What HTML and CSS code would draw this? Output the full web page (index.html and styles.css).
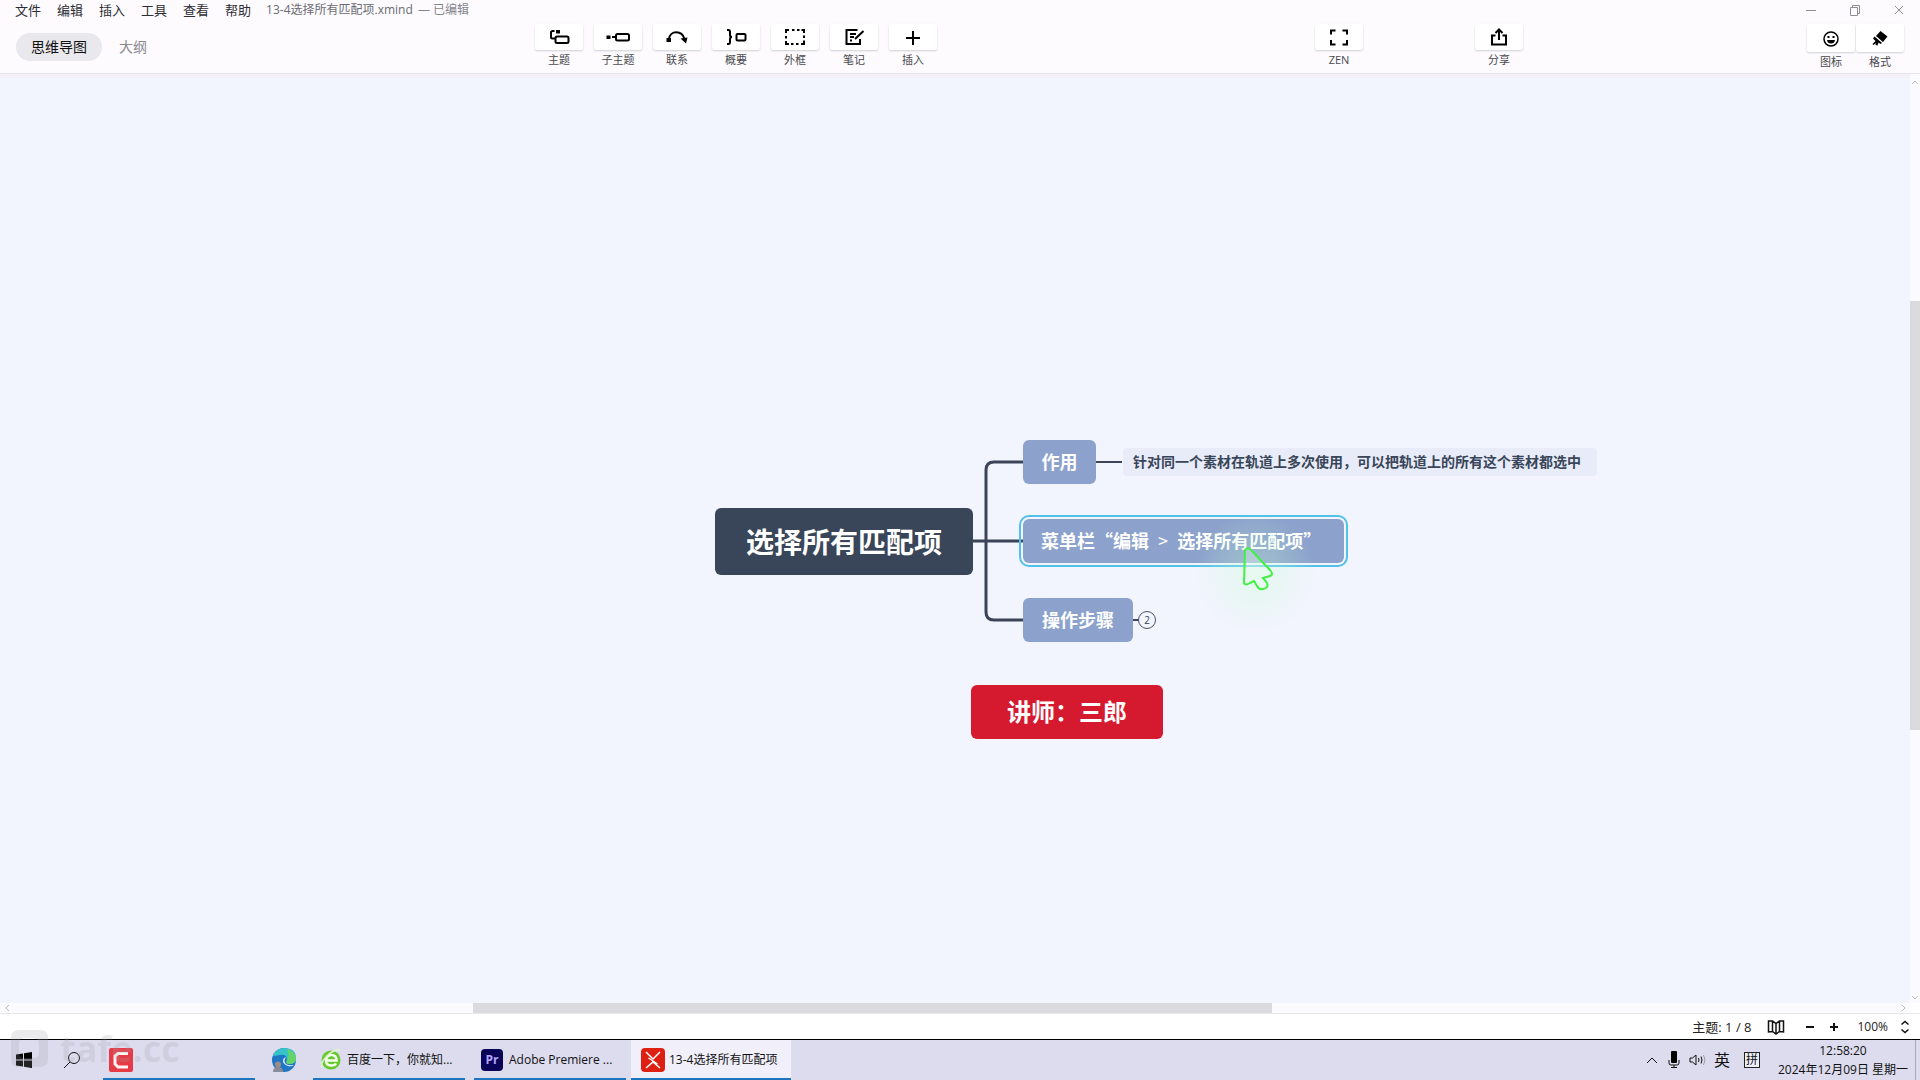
FILE: index.html
```html
<!DOCTYPE html>
<html lang="zh-CN">
<head>
<meta charset="utf-8">
<title>13-4选择所有匹配项.xmind</title>
<link rel="stylesheet" href="styles.css">
</head>
<body>
<header class="header">
  <div class="titlebar">
    <nav class="menus">
      <button>文件</button><button>编辑</button><button>插入</button><button>工具</button><button>查看</button><button>帮助</button>
    </nav>
    <h1 class="doc-title">13-4选择所有匹配项.xmind <span class="edited">— 已编辑</span></h1>
    <div class="window-controls">
      <button aria-label="最小化"><svg width="12" height="12" viewBox="0 0 12 12"><path d="M1 6.500h10"/></svg></button>
      <button aria-label="还原"><svg width="12" height="12" viewBox="0 0 12 12"><path d="M1.500 3.500h7v8h-7zM3.500 3.500v-2h7v8h-2"/></svg></button>
      <button aria-label="关闭"><svg width="12" height="12" viewBox="0 0 12 12"><path d="M2 2l8 8M10 2l-8 8"/></svg></button>
    </div>
  </div>
  <div class="toolbar">
    <div class="views">
      <button class="view view-active">思维导图</button><button class="view">大纲</button>
    </div>
    <div class="tools">
      <button class="tool"><span class="tool-box"><svg width="24" height="20" viewBox="0 0 24 20"><path d="M7.500 4H5.500a1.500 1.500 0 0 0-1.500 1.500V10a1.500 1.500 0 0 0 1.500 1.500h3"/><rect x="8.500" y="9.500" width="13" height="6.500" rx="1.500"/><path class="fill" d="M9 3h4v3.500H9z"/></svg></span>主题</button>
      <button class="tool"><span class="tool-box"><svg width="24" height="20" viewBox="0 0 24 20"><path d="M6 10h5"/><rect x="10" y="7" width="13" height="6.500" rx="1.500"/><path class="fill" d="M0.500 8.500h4v3.500h-4z"/></svg></span>子主题</button>
      <button class="tool"><span class="tool-box"><svg width="24" height="20" viewBox="0 0 24 20"><path d="M4 12C5 3 17 3 19.500 12"/><path class="fill" d="M1.500 11h4.500v4H1.500zM15.500 11.500l7-1-1.500 6z"/></svg></span>联系</button>
      <button class="tool"><span class="tool-box"><svg width="24" height="20" viewBox="0 0 24 20"><path d="M3 3h1.500q1.500 0 1.500 2v3q0 2 2 2-2 0-2 2v3q0 2-1.500 2H3"/><rect x="12.500" y="7" width="9" height="6.500" rx="1"/></svg></span>概要</button>
      <button class="tool"><span class="tool-box"><svg width="24" height="20" viewBox="0 0 24 20"><path d="M3 6V3h3M9 3h2.500M14 3h2.500M18.500 3H21v3M21 8.500V11M21 13.500V17h-3M15.500 17H13M10.500 17H8M6 17H3v-3M3 11.500V9"/></svg></span>外框</button>
      <button class="tool"><span class="tool-box"><svg width="24" height="20" viewBox="0 0 24 20"><path d="M15.500 3H4.500v14H18v-5M8 7h6M8 10h4M8 13.500h2M21.500 4l-8.500 8"/></svg></span>笔记</button>
      <button class="tool"><span class="tool-box"><svg width="24" height="20" viewBox="0 0 24 20"><path d="M12 4v14M5 11h14"/></svg></span>插入</button>
    </div>
    <div class="tools"><button class="tool"><span class="tool-box"><svg width="24" height="20" viewBox="0 0 24 20"><path d="M4 7.500V3.500h4.500M15.500 3.500H20v4M20 13v4.500h-4.500M8.500 17.500H4V13"/></svg></span>ZEN</button></div>
    <div class="tools"><button class="tool"><span class="tool-box"><svg width="24" height="20" viewBox="0 0 24 20"><path d="M8.500 8.500H5v9h14v-9h-3.500M12 13V3M8.500 6L12 2.500 15.500 6"/></svg></span>分享</button></div>
    <div class="tools tools-side">
      <button class="tool"><span class="tool-box"><svg width="24" height="20" viewBox="0 0 24 20"><circle class="face" cx="12" cy="11" r="7"/><path class="fill" d="M8 12h8q-.5 3.500-4 3.500T8 12zM8.500 8h2v2h-2zM13.500 8h2v2h-2z"/></svg></span>图标</button>
      <button class="tool"><span class="tool-box"><svg width="24" height="20" viewBox="0 0 24 20"><path class="fill" d="M12.500 3l7 5.500-4.500 5.500-7-6zM6.500 8.500l7.500 6.500-1.500 1-2-1.500-1 3-2-.5.500-2-2.500 2-1-1L7.500 13 5 10.500z"/></svg></span>格式</button>
    </div>
  </div>
</header>

<main class="workspace">
  <div class="canvas">
    <svg class="links" width="1200" height="700" viewBox="0 0 1200 700">
      <path d="M973 463h50"/>
      <path d="M1023 384h-29q-8 0-8 8v142q0 8 8 8h29"/>
      <path class="thin" d="M1096 384h26M1133 542h6"/>
    </svg>
    <div class="node root">选择所有匹配项</div>
    <div class="node topic effect">作用</div>
    <div class="node leaf">针对同一个素材在轨道上多次使用，可以把轨道上的所有这个素材都选中</div>
    <div class="node topic selected"><span>菜单栏“编辑 <span class="sep">&gt;</span> 选择所有匹配项”</span></div>
    <div class="node topic steps">操作步骤</div>
    <button class="fold">2</button>
    <div class="node floating">讲师：三郎</div>
    <div class="glow"></div>
    <svg class="cursor" width="36" height="48" viewBox="0 0 36 48"><path d="M4 5Q7 1 11 6L29 25Q33 30 29 31L22 33Q24 35 26 38Q28 43 22 44Q18 45 16 41L13 36L9 38Q4 41 3 38Z"/></svg>
  </div>
  <div class="scroll-y"><svg width="10" height="10" viewBox="0 0 10 10"><path d="M2 6l3-3 3 3"/></svg><div class="track-y"><div class="thumb"></div></div><svg width="10" height="10" viewBox="0 0 10 10"><path d="M2 3l3 3 3-3"/></svg></div>
  <div class="scroll-x"><svg width="10" height="10" viewBox="0 0 10 10"><path d="M6 2L3 5l3 3"/></svg><div class="track-x"><div class="thumb"></div></div><svg width="10" height="10" viewBox="0 0 10 10"><path d="M2 2l3 3-3 3"/></svg></div>
</main>

<footer class="status">
  <span class="count">主题: 1 / 8</span>
  <button class="map" aria-label="导航图"><svg width="18" height="16" viewBox="0 0 18 16"><path d="M1.500 2l4 0 3.500 2.500L12.500 2l4 0v11l-4-.5L9 15l-3.500-2.500-4 .5zM5.500 2v10.500M9 4.500V15M12.500 2v10.500"/></svg></button>
  <button class="zoom" aria-label="缩小"><svg width="10" height="10" viewBox="0 0 10 10"><path d="M1 5h8"/></svg></button>
  <button class="zoom" aria-label="放大"><svg width="10" height="10" viewBox="0 0 10 10"><path d="M1 5h8M5 1v8"/></svg></button>
  <button class="level">100%<svg width="10" height="14" viewBox="0 0 10 14"><path d="M1.500 4.500L5 1.500l3.500 3M1.500 9.500L5 12.500l3.500-3"/></svg></button>
</footer>

<div class="taskbar">
  <button class="sys" aria-label="开始"><svg width="16" height="16" viewBox="0 0 16 16"><path d="M0 2.500l7-1v6H0zM8 1.300L16 0v7.500H8zM0 8.500h7v6l-7-1zM8 8.500h8V16l-8-1.300z"/></svg></button>
  <button class="sys" aria-label="搜索"><svg class="line" width="18" height="18" viewBox="0 0 18 18"><circle cx="11" cy="7" r="5.500"/><path d="M7 11l-6 6"/></svg></button>
  <button class="task task-camtasia" aria-label="Camtasia"><svg width="24" height="24" viewBox="0 0 24 24"><rect width="24" height="24" rx="2" fill="#e63b46"/><path d="M19 5.500H9L6 8v8l3 3h10" fill="none" stroke="#fff4f2" stroke-width="3"/></svg></button>
  <button class="edge" aria-label="Edge"><svg width="24" height="24" viewBox="0 0 24 24"><circle cx="12" cy="12" r="12" fill="#1f76c4"/><path d="M1 8Q4 0 12 0q12 0 12 10 0 6-7 6-4 0-2-4 0-6-7-5Q2 8 1 8z" fill="#35c3c9"/><path d="M15 1q9 3 9 10 0 5-7 5-4 0-2-4 3-5 0-11z" fill="#63d36a"/><path d="M14 9q-3 4 0 7 3 2 8 1-2 2-6 1-5-2-5-5t3-4z" fill="#e4edf6"/><circle cx="6" cy="16.500" r="3" fill="#a08c86"/><path d="M1 24q0-5 5-5t5 5z" fill="#8b8c98"/></svg></button>
  <button class="task"><svg width="20" height="24" viewBox="0 0 20 24"><circle cx="10" cy="12" r="9.500" fill="#66c92c"/><path d="M5 12.500h10.500Q15.500 7 10.500 7T5 12.500q0 5 5 5 4 0 5-2" fill="none" stroke="#f5fff0" stroke-width="2.500"/><path d="M1 20Q-1 15 6 8T19 2" fill="none" stroke="#dff5cf" stroke-width="1.500"/></svg>百度一下，你就知...</button>
  <button class="task"><svg class="pr" width="22" height="22" viewBox="0 0 22 22"><rect width="22" height="22" rx="4" fill="#0a0458"/><text x="11" y="15" text-anchor="middle" class="pr-text">Pr</text></svg>Adobe Premiere ...</button>
  <button class="task task-active"><svg width="24" height="24" viewBox="0 0 24 24"><rect width="24" height="24" rx="4" fill="#dd2012"/><path d="M5 4l7 7 7-7M5 20l7-6 7 6M7.500 10l9 6" fill="none" stroke="#fff" stroke-width="1.500"/></svg>13-4选择所有匹配项</button>
  <div class="tray">
    <svg class="line" width="14" height="12" viewBox="0 0 14 12"><path d="M2 9l5-5 5 5"/></svg>
    <svg width="12" height="18" viewBox="0 0 12 18"><rect x="3" y="0" width="6" height="12" rx="1"/><path class="line" d="M1 9v3q0 2 2 2h6q2 0 2-2V9M6 14v3M3 16.500h6"/></svg>
    <svg class="line" width="18" height="14" viewBox="0 0 18 14"><path d="M1 5h2.500L7 2v10L3.500 9H1zM9.500 5q1 2 0 4M12 3.500q2 3.500 0 7"/><path class="dim" d="M14.500 2q3 5 0 10"/></svg>
    <span class="lang">英</span>
    <span class="ime">拼</span>
    <div class="clock"><time>12:58:20</time><time>2024年12月09日 星期一</time></div>
  </div>
  <div class="watermark"><svg width="37" height="37" viewBox="0 0 37 37"><path fill-rule="evenodd" d="M8 0h21q8 0 8 8v21q0 8-8 8H8q-8 0-8-8V8q0-8 8-8zM14 8q-6 0-6 6v8q0 6 6 6h8q6 0 6-6v-8q0-6-6-6z"/></svg>tafe.cc</div>
</div>
</body>
</html>
```
FILE: styles.css
```css
* { box-sizing: border-box; }
body {
  margin: 0;
  height: 100vh;
  display: flex;
  flex-direction: column;
  overflow: hidden;
  background: #fff;
  color: #222;
  font: 12px/16px "Open Sans", "Noto Sans CJK SC", sans-serif;
}
button {
  border: 0;
  padding: 0;
  background: none;
  color: inherit;
  font: inherit;
}
svg { flex: none; }

.header {
  background: #fdfbfe;
  border-bottom: 1px solid #e6e5ee;
}
.titlebar {
  display: flex;
  align-items: center;
  height: 20px;
  padding: 0 15px;
}
.menus {
  display: flex;
  gap: 16px;
  color: #2d2d33;
  font-size: 13px;
}
.doc-title {
  margin: 0 0 0 15px;
  color: #6b6b72;
  font-size: 12px;
  font-weight: 400;
}
.edited { margin-left: 2px; color: #85858c; }
.window-controls {
  display: flex;
  gap: 32px;
  margin-left: auto;
}
.window-controls svg {
  display: block;
  fill: none;
  stroke: #8e8e93;
}
.toolbar {
  display: grid;
  grid-template-columns: 535fr 780fr 160fr 332fr 113px;
  height: 53px;
  padding-top: 4px;
}
.views {
  display: flex;
  align-items: center;
  align-self: center;
  gap: 2px;
  padding: 0 0 4px 16px;
}
.view {
  height: 28px;
  padding: 0 15px;
  border-radius: 14px;
  color: #8a8a8e;
  font-size: 14px;
}
.view-active { background: #e9e8ec; color: #111; }
.tools {
  display: flex;
  align-items: flex-start;
  gap: 11px;
}
.tool {
  display: flex;
  flex-direction: column;
  align-items: center;
  gap: 2px;
  color: #4a4a4f;
  font-size: 11px;
}
.tool-box {
  display: flex;
  align-items: center;
  justify-content: center;
  width: 48px;
  height: 26px;
  background: #fff;
  border-radius: 2px;
  box-shadow: 0 1px 2px #cfced4;
}
.tool-box svg {
  fill: none;
  stroke: #000;
  stroke-width: 2;
}
.tool-box .fill { fill: #000; stroke: none; }
.tool-box .face { stroke-width: 1.500; }
.tools-side { gap: 1px; }
.tools-side .tool-box { height: 28px; }

.workspace {
  flex: 1;
  min-height: 0;
  display: grid;
  grid-template-columns: 1fr 10px;
  grid-template-rows: 1fr 10px;
  border-bottom: 1px solid #e9e7ee;
}
.canvas {
  position: relative;
  overflow: hidden;
  border-top: 4px solid #f4f2f8;
  background: #f2f4fe;
}
.scroll-y, .scroll-x { display: flex; background: #fbfaff; }
.scroll-y { flex-direction: column; padding: 4px 0 0; }
.scroll-x { padding: 0 0 0 3px; }
.scroll-y svg, .scroll-x svg { fill: none; stroke: #b8b7bf; }
.track-y, .track-x { flex: 1; display: flex; }
.track-y { flex-direction: column; padding-top: 213px; }
.track-x { padding-left: 460px; }
.thumb { flex: none; background: #dbdadf; }
.track-y .thumb { height: 62%; }
.track-x .thumb { width: 56%; }

.links { position: absolute; left: 0; top: 0; fill: none; stroke: #3c4558; stroke-width: 3; }
.links .thin { stroke-width: 2; }
.node {
  position: absolute;
  display: flex;
  align-items: center;
  justify-content: center;
  padding-bottom: 2px;
  border-radius: 6px;
  color: #fff;
  font-family: "Noto Sans CJK SC", sans-serif;
  font-weight: 700;
  white-space: nowrap;
}
.root { left: 715px; top: 430px; width: 258px; height: 67px; background: #394559; font-size: 28px; }
.topic { left: 1023px; height: 44px; background: #8ca2cc; font-size: 18px; }
.effect { top: 362px; width: 73px; }
.selected {
  top: 441px;
  width: 321px;
  justify-content: flex-start;
  padding-left: 18px;
  outline: 2px solid #50c2ea;
  outline-offset: 2px;
}
.sep { margin: 0 5px; font-weight: 400; }
.steps { top: 520px; width: 110px; }
.leaf { left: 1123px; top: 370px; width: 474px; height: 28px; padding-right: 6px; background: #e8ecf8; color: #394559; font-size: 14px; border-radius: 4px; }
.floating { left: 971px; top: 607px; width: 192px; height: 54px; background: #d51a30; font-size: 24px; }
.fold {
  position: absolute;
  left: 1138px;
  top: 533px;
  width: 18px;
  height: 18px;
  border: 1px solid #4a5265;
  border-radius: 50%;
  font-size: 10px;
  line-height: 16px;
  color: #394559;
}
.glow {
  position: absolute;
  left: 1195px;
  top: 435px;
  width: 120px;
  height: 120px;
  background: radial-gradient(closest-side, #c8ffd055, #c8ffd033 50%, #c8ffd000);
}
.cursor {
  position: absolute;
  left: 1241px;
  top: 467px;
  fill: #f0fff444;
  stroke: #42f044;
  stroke-width: 2;
}

.status {
  display: flex;
  align-items: center;
  justify-content: flex-end;
  height: 26px;
  padding-right: 10px;
  background: #fff;
  border-bottom: 1px solid #000;
  font-size: 13px;
}
.status svg { fill: none; stroke: #111; stroke-width: 2; display: block; }
.status .map svg { stroke-width: 1.500; }
.map { margin: 0 20px 0 16px; }
.zoom { margin-right: 14px; }
.level { display: flex; align-items: center; gap: 12px; margin-left: 4px; font-size: 12px; }
.level svg { stroke-width: 1.500; }

.taskbar {
  position: relative;
  display: flex;
  align-items: center;
  height: 40px;
  background: #dcdcee;
  color: #111;
}
.sys { width: 48px; height: 40px; }
.sys svg { display: block; margin: auto; }
.line { fill: none; stroke: #111; }
.task {
  display: flex;
  align-items: center;
  gap: 6px;
  width: 152px;
  height: 40px;
  margin-right: 9px;
  padding: 2px 8px 0;
  border-bottom: 2px solid #1c75be;
}
.task-camtasia { margin: 0 0 0 7px; padding: 2px 6px 0; }
.edge { width: 58px; }
.edge svg { display: block; margin: auto; }
.task .pr { margin-left: -1px; }
.task-active { width: 160px; margin: 0 0 0 -4px; padding: 2px 10px 0; gap: 4px; background: #f0effa; }
.pr-text { fill: #b5a4ff; font: 700 12px "Open Sans", sans-serif; }
.tray {
  display: flex;
  align-items: center;
  height: 40px;
  margin-left: auto;
  margin-right: 4px;
  padding-right: 7px;
  border-right: 1px solid #a9a9b8;
}
.tray svg { margin-right: 9px; }
.dim { stroke: #9a9aa8; }
.lang { font-size: 16px; margin: 0 14px 0 -2px; }
.ime { border: 1px solid #222; background: #eeeef6; width: 16px; height: 16px; line-height: 13px; text-align: center; margin-right: 18px; }
.clock { display: flex; flex-direction: column; align-items: center; gap: 3px; }
.watermark {
  position: absolute;
  left: 11px;
  top: -10px;
  display: flex;
  align-items: center;
  gap: 12px;
  color: #a0a0a838;
  font: 700 36px/37px "Open Sans", sans-serif;
  pointer-events: none;
}
.watermark svg { fill: #a0a0a838; }
```
